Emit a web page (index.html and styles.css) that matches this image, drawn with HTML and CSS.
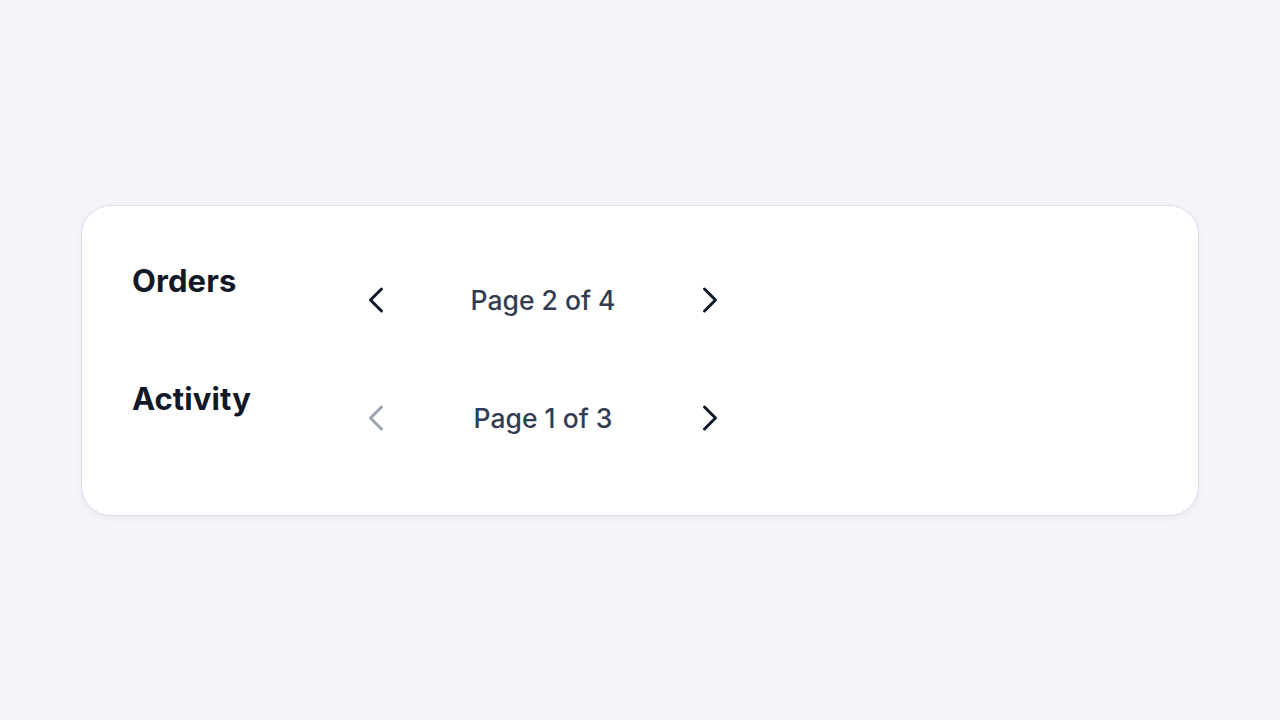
FILE: index.html
```html
<!DOCTYPE html>
<html lang="en">
<head>
    <meta charset="UTF-8">
    <meta name="viewport" content="width=device-width, initial-scale=1.0">
    <title>Pagination</title>
    <link rel="stylesheet" href="styles.css">
</head>
<body>
    <div class="card">
        <div class="row">
            <h2 class="label">Orders</h2>
            <nav class="pager">
                <button class="pager-btn" aria-label="Previous page">
                    <svg viewBox="0 0 16 28" width="16" height="28"><polyline points="13.5,3 2.5,14 13.5,25"/></svg>
                </button>
                <span class="pager-text">Page 2 of 4</span>
                <button class="pager-btn" aria-label="Next page">
                    <svg viewBox="0 0 16 28" width="16" height="28"><polyline points="2.5,3 13.5,14 2.5,25"/></svg>
                </button>
            </nav>
        </div>
        <div class="row">
            <h2 class="label">Activity</h2>
            <nav class="pager">
                <button class="pager-btn" aria-label="Previous page" disabled>
                    <svg viewBox="0 0 16 28" width="16" height="28"><polyline points="13.5,3 2.5,14 13.5,25"/></svg>
                </button>
                <span class="pager-text">Page 1 of 3</span>
                <button class="pager-btn" aria-label="Next page">
                    <svg viewBox="0 0 16 28" width="16" height="28"><polyline points="2.5,3 13.5,14 2.5,25"/></svg>
                </button>
            </nav>
        </div>
    </div>
</body>
</html>
```

FILE: styles.css
```css
body {
    margin: 0;
    height: 100vh;
    display: flex;
    align-items: center;
    justify-content: center;
    background-color: #f4f5f9;
    font-family: 'Inter', 'Noto Sans', sans-serif;
}

.card {
    box-sizing: border-box;
    width: 1118px;
    height: 311px;
    padding: 50px 50px;
    background: #fff;
    border: 1px solid #dcdfe7;
    border-radius: 30px;
    box-shadow: 0 2px 6px rgba(20, 30, 60, 0.06);
    display: flex;
    flex-direction: column;
    gap: 52px;
}

.row {
    display: flex;
    align-items: flex-start;
}

.label {
    width: 222px;
    margin: 0;
    font-size: 31px;
    font-weight: 700;
    line-height: 50px;
    color: #111827;
    letter-spacing: 0.1px;
}

.pager {
    display: flex;
    align-items: center;
    margin-top: 22px;
}

.pager-btn {
    width: 44px;
    height: 44px;
    padding: 0;
    border: none;
    background: none;
    display: flex;
    align-items: center;
    justify-content: center;
    color: #111827;
    cursor: pointer;
}

.pager-btn:disabled {
    color: #9ca3af;
    cursor: default;
}

.pager-btn svg {
    fill: none;
    stroke: currentColor;
    stroke-width: 3;
    stroke-linecap: round;
    stroke-linejoin: round;
}

.pager-text {
    width: 290px;
    text-align: center;
    font-size: 26.5px;
    font-weight: 500;
    color: #333d51;
}
```
